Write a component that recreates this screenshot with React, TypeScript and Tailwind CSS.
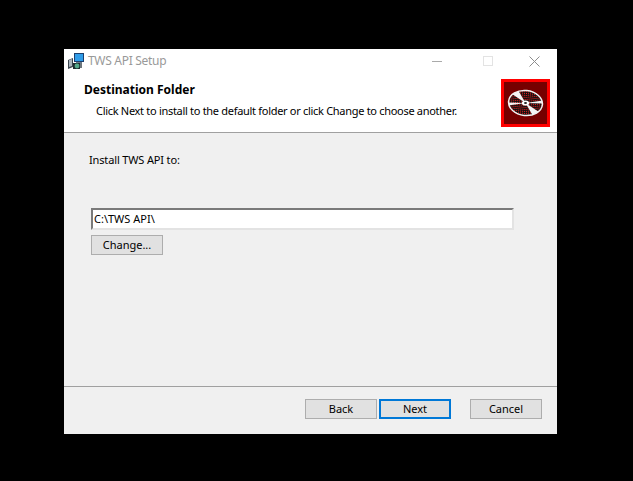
import type { ReactNode } from "react";

const FONT = "font-['Noto_Sans',_'Open_Sans',_sans-serif]";

function SetupIcon() {
  return (
    <svg width="18" height="18" viewBox="0 0 18 18" className="shrink-0">
      <rect x="7" y="1" width="10" height="9" fill="#1c3f6e" />
      <rect x="8" y="2" width="8" height="7" fill="#2f9ce8" />
      <rect x="9" y="10" width="6" height="2" fill="#6b7a88" />
      <path d="M1 8l5-2v9l-5 2z" fill="#3a444d" />
      <path d="M2 8l3-1v7l-3 1z" fill="#a9b4bd" />
      <rect x="6" y="11" width="7" height="6" fill="#1f2c30" />
      <circle cx="10" cy="14" r="2.4" fill="#54a88a" />
      <rect x="13" y="11" width="2" height="5" fill="#6d767c" />
    </svg>
  );
}

function DiscLogo() {
  return (
    <div className="flex h-[48px] w-[49px] items-center justify-center border-[3px] border-[#ff0000] bg-[#770000]">
      <svg width="37" height="28" viewBox="0 0 37 28">
        <defs>
          <pattern id="dots" width="2" height="2" patternUnits="userSpaceOnUse">
            <rect width="2" height="2" fill="#111111" />
            <rect width="1" height="1" fill="#ff2020" />
          </pattern>
          <clipPath id="disc">
            <ellipse cx="18.5" cy="14" rx="17" ry="12.5" transform="rotate(6 18.5 14)" />
          </clipPath>
        </defs>
        <ellipse cx="18.5" cy="14" rx="17" ry="12.5" transform="rotate(6 18.5 14)" fill="url(#dots)" stroke="#f2f2f2" strokeWidth="1.5" />
        <g clipPath="url(#disc)">
          <path d="M18.5 14L5 5 11 1zM18.5 14L32 23 26 27z" fill="#f4f4f4" />
          <path d="M18.5 14L0 13.5 1 16.5zM18.5 14L37 14.5 36 11.5z" fill="#f4f4f4" />
        </g>
        <ellipse cx="18.5" cy="14" rx="3.6" ry="2.6" fill="#ffffff" />
        <ellipse cx="18.5" cy="14" rx="1.5" ry="1.1" fill="#222222" />
      </svg>
    </div>
  );
}

function DialogButton({ children, primary }: { children: ReactNode; primary?: boolean }) {
  return (
    <button
      type="button"
      className={
        primary
          ? "block h-5 w-[72px] border-2 border-[#0078d7] bg-[#e1e1e1] pb-[2px] text-[11px] leading-none text-[#000000]"
          : "block h-5 w-[72px] border border-[#adadad] bg-[#e1e1e1] pb-[2px] text-[11px] leading-none text-[#000000]"
      }
    >
      {children}
    </button>
  );
}

export default function App() {
  return (
    <div className={`h-[481px] w-[633px] overflow-hidden bg-black pl-[64px] pt-[49px] ${FONT}`}>
      <div className="flex h-[385px] w-[493px] flex-col bg-[#f0f0f0]">
        {/* Title bar */}
        <div className="flex h-[24px] shrink-0 items-center bg-white pl-[3px]">
          <SetupIcon />
          <span className="ml-[3px] text-[12px] tracking-[-0.3px] text-[#999999]">TWS API Setup</span>
          <div className="ml-auto flex items-center">
            <span className="mr-[41px] h-px w-[10px] bg-[#aaaaaa]" />
            <span className="mr-[36px] h-[10px] w-[10px] border border-[#e3e3e3]" />
            <svg width="11" height="11" viewBox="0 0 11 11" className="mr-[17px]">
              <path d="M0.5 0.5l10 10M10.5 0.5l-10 10" stroke="#8c8c8c" fill="none" />
            </svg>
          </div>
        </div>

        {/* Banner */}
        <div className="flex h-[60px] shrink-0 items-start justify-between border-b border-[#a0a0a0] bg-white">
          <div className="pl-5 pt-[8px]">
            <h1 className="text-[12px] font-bold leading-[18px] text-black">Destination Folder</h1>
            <p className="mt-[4px] pl-3 text-[11px] leading-[16px] tracking-[-0.3px] text-black">
              Click Next to install to the default folder or click Change to choose another.
            </p>
          </div>
          <div className="mr-[7px] mt-[6px]">
            <DiscLogo />
          </div>
        </div>

        {/* Body */}
        <div className="flex min-h-0 flex-1 flex-col pl-[25px] pt-[19px]">
          <p className="text-[11px] leading-4 tracking-[-0.15px] text-black">Install TWS API to:</p>
          <div className="ml-[2px] mt-[40px] flex h-[22px] w-[423px] items-center border-2 border-[#7a7a7a] border-r-[#e3e3e3] border-b-[#e3e3e3] bg-white pl-[1px] text-[11px] text-black">
            C:\TWS API\
          </div>
          <div className="ml-[2px] mt-[5px]">
            <DialogButton>Change...</DialogButton>
          </div>
        </div>

        {/* Footer */}
        <div className="flex h-[48px] shrink-0 items-start border-t border-[#a0a0a0] pl-[241px] pt-[12px]">
          <DialogButton>Back</DialogButton>
          <div className="ml-[2px]">
            <DialogButton primary>Next</DialogButton>
          </div>
          <div className="ml-[19px]">
            <DialogButton>Cancel</DialogButton>
          </div>
        </div>
      </div>
    </div>
  );
}
